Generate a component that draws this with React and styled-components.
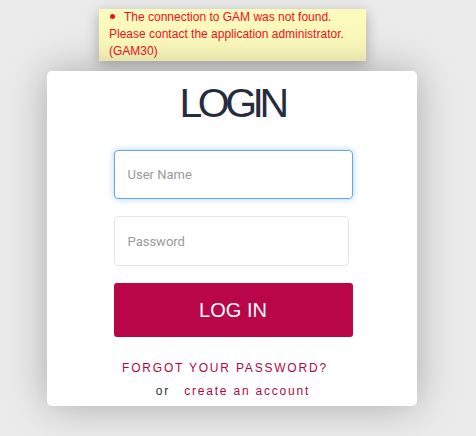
import React from "react";
import styled, { createGlobalStyle } from "styled-components";

const Global = createGlobalStyle`
  html, body { margin: 0; padding: 0; }
  body {
    background: #ebebeb;
    font-family: "Liberation Sans", Arial, sans-serif;
    width: 476px;
    height: 436px;
    overflow: hidden;
  }
`;

const Page = styled.div`
  display: flex;
  flex-direction: column;
  padding-top: 9px;
`;

const ErrorBox = styled.ul`
  margin: 0 0 0 99px;
  width: 267px;
  box-sizing: border-box;
  background: #fbf9bb;
  box-shadow: 0 4px 14px rgba(0, 0, 0, 0.28);
  color: #f2101e;
  font-size: 12px;
  line-height: 17px;
  list-style: none;
  padding: 0 6px 1px 10px;
`;

const ErrorItem = styled.li`
  &::before {
    content: "";
    display: inline-block;
    width: 5px;
    height: 5px;
    border-radius: 50%;
    background: #f2101e;
    vertical-align: 2px;
    margin: 0 9px 0 1px;
  }
`;

const Card = styled.div`
  margin: 10px 0 0 47px;
  width: 370px;
  height: 335px;
  box-sizing: border-box;
  background: #fff;
  border-radius: 5px;
  box-shadow: 0 0 40px rgba(0, 0, 0, 0.28);
  display: flex;
  flex-direction: column;
  align-items: center;
  padding-top: 8px;
`;

const Title = styled.h1`
  margin: 0 0 0 4px;
  font-family: "Liberation Sans", Arial, sans-serif;
  font-weight: normal;
  font-size: 41px;
  line-height: 48px;
  letter-spacing: -4.5px;
  color: #262b40;
  padding-right: 4px;
`;

const Form = styled.div`
  width: 239px;
  margin: 23px 0 0 2px;
  display: flex;
  flex-direction: column;
  align-items: flex-start;
`;

const Input = styled.input`
  box-sizing: border-box;
  width: ${(p) => (p.$focused ? "239px" : "235px")};
  height: ${(p) => (p.$focused ? "49px" : "50px")};
  border-radius: 4px;
  border: 1px solid ${(p) => (p.$focused ? "#66a8e8" : "#e6e6e6")};
  box-shadow: ${(p) =>
    p.$focused ? "0 0 6px rgba(102, 168, 232, 0.55)" : "none"};
  padding: 0 13px;
  font-family: "Roboto", "Liberation Sans", sans-serif;
  font-size: 13px;
  color: #333;
  outline: none;
  margin-bottom: 17px;
  &::placeholder { color: #9a9a9a; }
`;

const Button = styled.button`
  width: 239px;
  height: 54px;
  margin-top: 0;
  border: none;
  border-radius: 3px;
  background: #b80649;
  color: #fff;
  font-family: "Liberation Sans", Arial, sans-serif;
  font-size: 20px;
  cursor: pointer;
`;

const Links = styled.div`
  margin-top: 20px;
  display: flex;
  flex-direction: column;
  align-items: center;
  font-size: 12px;
  line-height: 23px;
`;

const Forgot = styled.a`
  color: #b3063f;
  text-decoration: none;
  letter-spacing: 1.8px;
  margin-right: 14px;
`;

const Line = styled.div`
  color: #2b3040;
  letter-spacing: 1.8px;
  margin-left: 2px;
`;

const Create = styled.a`
  color: #b3063f;
  text-decoration: none;
  margin-left: 14px;
`;

export default function App() {
  return (
    <>
      <Global />
      <Page>
        <ErrorBox>
          <ErrorItem>
            The connection to GAM was not found. Please contact the
            application administrator. (GAM30)
          </ErrorItem>
        </ErrorBox>
        <Card>
          <Title>LOGIN</Title>
          <Form>
            <Input $focused placeholder="User Name" />
            <Input type="password" placeholder="Password" />
            <Button>LOG IN</Button>
          </Form>
          <Links>
            <Forgot href="#">FORGOT YOUR PASSWORD?</Forgot>
            <Line>
              or<Create href="#">create an account</Create>
            </Line>
          </Links>
        </Card>
      </Page>
    </>
  );
}
